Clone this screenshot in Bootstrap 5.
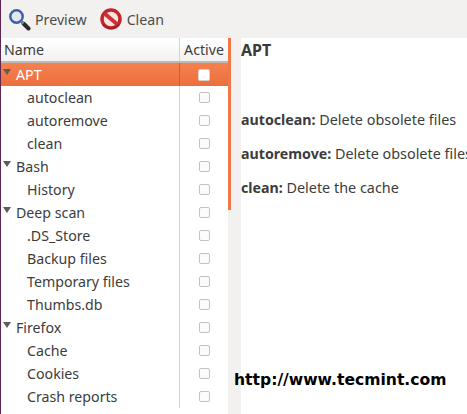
<!DOCTYPE html>
<html><head><meta charset="utf-8">
<link href="https://cdn.jsdelivr.net/npm/bootstrap@5.3.0/dist/css/bootstrap.min.css" rel="stylesheet">
<style>
html,body{height:414px;overflow:hidden;margin:0}
body{font-family:"Noto Sans","Open Sans",sans-serif;font-size:14.2px;color:#3c3c3c;background:#f2f1f0;border-left:1px solid #5e2750;line-height:23px}
.tool-strip{height:38px;padding-left:8px;gap:13px}
.tool-item{gap:4px;color:#4c4c4c}
.tree-pane{width:227px;background:#fff;height:376px;overflow:hidden}
.head-row{height:25px;border-bottom:2px solid #bdbab6;background:linear-gradient(#fff,#f3f2f1);align-items:center}
.name-cell{width:178px;padding-left:3px}
.act-cell{width:49px;border-left:1px solid #d6d4d2;display:flex;align-items:center;justify-content:center;align-self:stretch}
.tree-row{height:23px}
.tree-row.sel{background:linear-gradient(#f58150,#ec6f3c);color:#fff}
.tree-row.sel .act-cell{border-left-color:#b9653e}
.kid{padding-left:26px}
.top-level{padding-left:15px;position:relative}
.arrow{position:absolute;left:2px;top:6px;width:0;height:0;border-left:4px solid transparent;border-right:4px solid transparent;border-top:6px solid #5f5c58}
.tick{width:11px;height:11px;border:1px solid #c4c2bf;border-radius:2px;background:#fbfbfb}
.sel .tick{background:#fff;border-color:#d9d2cd;width:12px;height:12px}
.scroll-rail{width:13px;height:376px}
.scroll-thumb{width:3px;height:172px;background:#f07746}
.detail-pane{height:376px;background:#fff;overflow:hidden;white-space:nowrap;flex:1;min-width:0}
.detail-title{font-size:16px;font-weight:700;color:#3a3a3a;line-height:24px;margin:0;height:70px}
.detail-line{height:34px;margin:0;line-height:24px;color:#3c3c3c;font-size:14.4px}
.detail-line b{font-size:14.2px}
.mark-url{position:absolute;left:234px;top:369px;font-family:"DejaVu Sans",sans-serif;font-weight:700;font-size:15.6px;color:#000;line-height:22px;white-space:nowrap}
</style></head>
<body>
<div class="d-flex align-items-center tool-strip">
  <div class="d-flex align-items-center tool-item">
    <svg width="22" height="24" viewBox="0 0 22 24"><path d="M14.500 16.500l5 5" stroke="#2b2b2b" stroke-width="4" stroke-linecap="round"/><circle cx="7.500" cy="9.500" r="6.200" fill="#e4e7ee" stroke="#3560ac" stroke-width="2.400"/><path d="M12.500 14.500l2 2" stroke="#7d8087" stroke-width="2.500"/></svg>
    <span>Preview</span>
  </div>
  <div class="d-flex align-items-center tool-item">
    <svg width="23" height="24" viewBox="0 0 23 24"><circle cx="11" cy="12" r="9" fill="#f6e4e0" stroke="#c2262e" stroke-width="3.500"/><path d="M4.500 6.500l13 11" stroke="#cf3038" stroke-width="3.800"/><path d="M3 17.500a10.500 10.500 0 0 0 16 0" fill="none" stroke="#9c1c24" stroke-width="1.500"/></svg>
    <span>Clean</span>
  </div>
</div>
<div class="d-flex">
  <div class="tree-pane">
    <div class="d-flex head-row"><div class="name-cell">Name</div><div class="act-cell">Active</div></div>
    <div class="d-flex tree-row sel"><div class="name-cell top-level"><i class="arrow"></i>APT</div><div class="act-cell"><div class="tick"></div></div></div>
    <div class="d-flex tree-row"><div class="name-cell kid">autoclean</div><div class="act-cell"><div class="tick"></div></div></div>
    <div class="d-flex tree-row"><div class="name-cell kid">autoremove</div><div class="act-cell"><div class="tick"></div></div></div>
    <div class="d-flex tree-row"><div class="name-cell kid">clean</div><div class="act-cell"><div class="tick"></div></div></div>
    <div class="d-flex tree-row"><div class="name-cell top-level"><i class="arrow"></i>Bash</div><div class="act-cell"><div class="tick"></div></div></div>
    <div class="d-flex tree-row"><div class="name-cell kid">History</div><div class="act-cell"><div class="tick"></div></div></div>
    <div class="d-flex tree-row"><div class="name-cell top-level"><i class="arrow"></i>Deep scan</div><div class="act-cell"><div class="tick"></div></div></div>
    <div class="d-flex tree-row"><div class="name-cell kid">.DS_Store</div><div class="act-cell"><div class="tick"></div></div></div>
    <div class="d-flex tree-row"><div class="name-cell kid">Backup files</div><div class="act-cell"><div class="tick"></div></div></div>
    <div class="d-flex tree-row"><div class="name-cell kid">Temporary files</div><div class="act-cell"><div class="tick"></div></div></div>
    <div class="d-flex tree-row"><div class="name-cell kid">Thumbs.db</div><div class="act-cell"><div class="tick"></div></div></div>
    <div class="d-flex tree-row"><div class="name-cell top-level"><i class="arrow"></i>Firefox</div><div class="act-cell"><div class="tick"></div></div></div>
    <div class="d-flex tree-row"><div class="name-cell kid">Cache</div><div class="act-cell"><div class="tick"></div></div></div>
    <div class="d-flex tree-row"><div class="name-cell kid">Cookies</div><div class="act-cell"><div class="tick"></div></div></div>
    <div class="d-flex tree-row"><div class="name-cell kid">Crash reports</div><div class="act-cell"><div class="tick"></div></div></div>
  </div>
  <div class="scroll-rail"><div class="scroll-thumb"></div></div>
  <div class="detail-pane">
    <p class="detail-title">APT</p>
    <p class="detail-line"><b>autoclean:</b> Delete obsolete files</p>
    <p class="detail-line"><b>autoremove:</b> Delete obsolete files</p>
    <p class="detail-line"><b>clean:</b> Delete the cache</p>
  </div>
</div>
<div class="mark-url">http://www.tecmint.com</div>
</body></html>
